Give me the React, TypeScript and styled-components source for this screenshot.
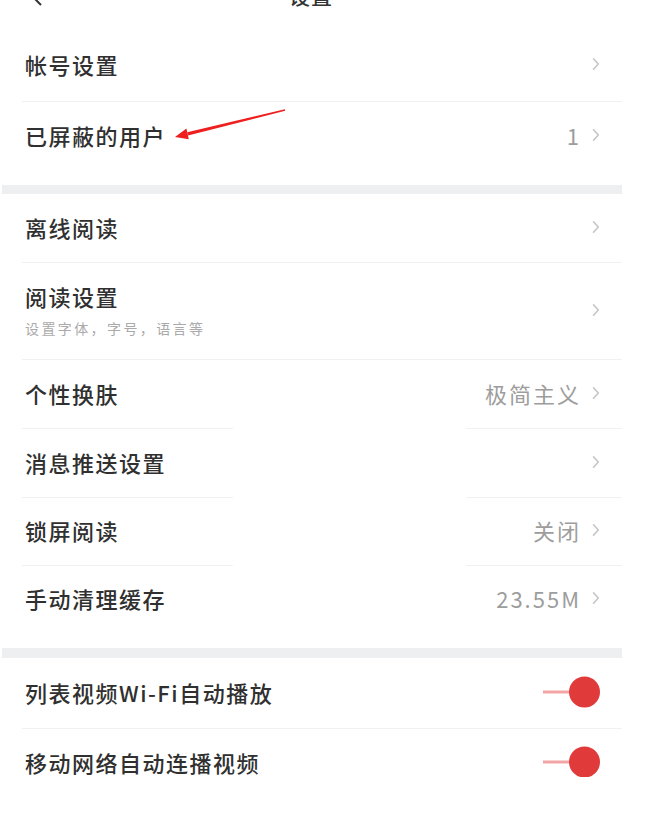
import * as React from "react";
import styled, { createGlobalStyle } from "styled-components";

const GlobalStyle = createGlobalStyle`
  html, body {
    margin: 0;
    padding: 0;
    background: #fff;
  }
  body {
    font-family: "Noto Sans CJK SC", "Noto Sans", sans-serif;
    color: #333;
  }
`;

const Screen = styled.div`
  width: 622px;
  height: 777px;
  overflow: hidden;
  background: #fff;
`;

const Header = styled.header`
  display: grid;
  grid-template-columns: 1fr auto 1fr;
  align-items: start;
  height: 30px;
  overflow: hidden;
`;

const BackIcon = styled.svg`
  margin-top: -13px;
  margin-left: 31px;
`;

const Title = styled.h1`
  margin: -15px 0 0;
  font-size: 21px;
  line-height: 21px;
  font-weight: 500;
  letter-spacing: 1px;
  color: #333;
`;

const Section = styled.section<{ $end?: number }>`
  display: flex;
  flex-direction: column;
  padding-bottom: ${(p) => p.$end ?? 0}px;
`;

const Band = styled.div<{ $h: number }>`
  height: ${(p) => p.$h}px;
  margin-left: 2px;
  background: #eeeff1;
`;

const Divider = styled.div<{ $split?: boolean }>`
  height: 1px;
  margin-left: 22px;
  background: ${(p) =>
    p.$split
      ? "linear-gradient(to right, #f1f1f1 0, #f1f1f1 211px, transparent 211px, transparent 444px, #f1f1f1 444px)"
      : "#f1f1f1"};
`;

const Row = styled.div<{ $h?: number }>`
  position: relative;
  display: flex;
  align-items: center;
  box-sizing: border-box;
  height: ${(p) => p.$h ?? 68}px;
  padding: 0 22px 3px 25px;
`;

const Label = styled.div`
  flex: 1;
  display: flex;
  flex-direction: column;
  gap: 12px;
`;

const Name = styled.span`
  font-size: 22px;
  line-height: 24px;
  font-weight: 500;
  letter-spacing: 1.5px;
  color: #303030;
`;

const Hint = styled.span`
  font-size: 14px;
  line-height: 16px;
  letter-spacing: 2.4px;
  color: #aaa;
`;

const Value = styled.span`
  font-size: 22px;
  letter-spacing: 2px;
  color: #9d9d9d;
  margin-right: 11px;
`;

const Chevron = () => (
  <svg width="8" height="14" viewBox="0 0 8 14">
    <path
      d="M1.5 1.8 L6.3 7 L1.5 12.2"
      fill="none"
      stroke="#c6c6c6"
      strokeWidth="1.6"
      strokeLinecap="round"
      strokeLinejoin="round"
    />
  </svg>
);

const Toggle = () => (
  <svg width="58" height="32" viewBox="0 0 58 32">
    <line x1="1" y1="16" x2="32" y2="16" stroke="#f3a4a4" strokeWidth="3" />
    <circle cx="42.5" cy="16" r="15.5" fill="#e03b3a" />
  </svg>
);

const Pointer = styled.svg`
  position: absolute;
  left: 170px;
  top: 3px;
`;

const Arrow = () => (
  <Pointer width="120" height="40" viewBox="0 0 120 40">
    <polygon
      points="115.2,5.7 114.8,4.3 17.2,27.3 18,30.5"
      fill="#ef1f1f"
    />
    <polygon points="5,32 18.8,34.2 16.4,23.6" fill="#ef1f1f" />
  </Pointer>
);

type Item = {
  name: string;
  hint?: string;
  value?: string;
  toggle?: boolean;
  split?: boolean;
  h?: number;
};

const account: Item[] = [
  { name: "帐号设置", h: 71 },
  { name: "已屏蔽的用户", value: "1", h: 68 },
];

const reading: Item[] = [
  { name: "离线阅读" },
  { name: "阅读设置", hint: "设置字体，字号，语言等", h: 96 },
  { name: "个性换肤", value: "极简主义", split: true },
  { name: "消息推送设置", split: true },
  { name: "锁屏阅读", value: "关闭", split: true, h: 67 },
  { name: "手动清理缓存", value: "23.55M", h: 67 },
];

const video: Item[] = [
  { name: "列表视频Wi-Fi自动播放", toggle: true, h: 70 },
  { name: "移动网络自动连播视频", toggle: true },
];

const SettingRow = ({ item, children }: { item: Item; children?: React.ReactNode }) => (
  <Row $h={item.h}>
    <Label>
      <Name>{item.name}</Name>
      {item.hint && <Hint>{item.hint}</Hint>}
    </Label>
    {item.value && <Value>{item.value}</Value>}
    {item.toggle ? <Toggle /> : <Chevron />}
    {children}
  </Row>
);

const Group = ({ items, end }: { items: Item[]; end?: number }) => (
  <Section $end={end}>
    {items.map((item, i) => (
      <React.Fragment key={item.name}>
        <SettingRow item={item}>{item.name === "已屏蔽的用户" && <Arrow />}</SettingRow>
        {i < items.length - 1 && <Divider $split={item.split} />}
      </React.Fragment>
    ))}
  </Section>
);

export default function App() {
  return (
    <>
      <GlobalStyle />
      <Screen>
        <Header>
          <BackIcon width="12" height="20" viewBox="0 0 12 20">
            <path d="M10 2 L2 10 L10 18" fill="none" stroke="#333" strokeWidth="2" />
          </BackIcon>
          <Title>设置</Title>
          <span />
        </Header>
        <Group items={account} end={15} />
        <Band $h={9} />
        <Group items={reading} end={15} />
        <Band $h={10} />
        <Group items={video} />
      </Screen>
    </>
  );
}
